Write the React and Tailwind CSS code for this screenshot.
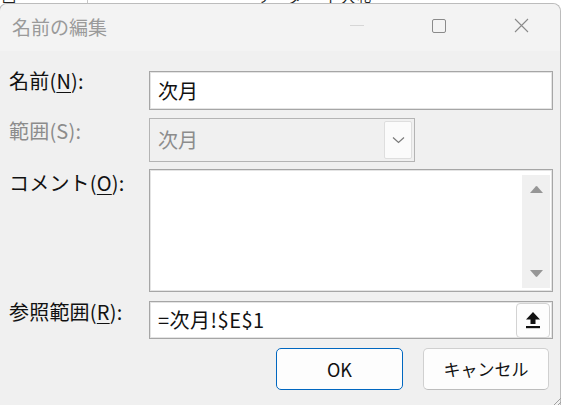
import React from "react";

function Label({ children, disabled, className = "" }) {
  return (
    <div
      className={`w-[140px] shrink-0 text-[20px] leading-[24px] tracking-[0.2px] ${
        disabled ? "text-[#8c8c8c]" : "text-[#111]"
      } ${className}`}
    >
      {children}
    </div>
  );
}

function Tri({ down }) {
  return (
    <svg width="15" height="9" viewBox="0 0 15 9">
      {down ? (
        <path d="M1 1 H14 L8.3 7.6 Q7.5 8.5 6.7 7.6 Z" fill="#969696" />
      ) : (
        <path d="M1 8 H14 L8.3 1.4 Q7.5 0.5 6.7 1.4 Z" fill="#969696" />
      )}
    </svg>
  );
}

export default function App() {
  return (
    <div className="w-[561px] h-[405px] bg-white overflow-hidden relative font-['Noto_Sans_CJK_JP','Liberation_Sans',sans-serif]">
      {/* spreadsheet behind, only a sliver visible */}
      <div className="h-[3px] overflow-hidden flex text-[14px] leading-[14px] text-[#222]">
        <div className="w-[88px] shrink-0 border-r border-[#c8c8c8] pl-[2px] -mt-[11px]">回</div>
        <div className="pl-[168px] -mt-[11px] tracking-[2px]">リーダー ト入札</div>
      </div>

      {/* dialog */}
      <div className="-ml-[1px] w-[562px] h-[402px] bg-[#f0f0f0] border-t border-x border-[#bcbcbc] rounded-t-[8px] flex flex-col">
        {/* title bar */}
        <div className="h-[47px] shrink-0 flex items-center rounded-t-[8px] bg-[#f3f3f3]">
          <div className="pl-[12px] text-[19px] text-[#9a9a9a] leading-[24px] -mt-[2px]">名前の編集</div>
          <div className="flex-1" />
          <div className="w-[14px] h-px bg-[#d6d6d6] mr-[68px] -mt-[4px]" />
          <div className="w-[14px] h-[14px] border border-[#8a8a8a] rounded-[2px] mr-[68px] -mt-[4px]" />
          <svg width="15" height="15" viewBox="0 0 15 15" className="mr-[31px] -mt-[4px]">
            <path d="M1 1 L14 14 M14 1 L1 14" stroke="#8a8a8a" strokeWidth="1.1" />
          </svg>
        </div>

        {/* body */}
        <div className="pl-[9px] flex flex-col">
          {/* name */}
          <div className="flex mt-[20px]">
            <Label className="-mt-[2px]">
              名前(<span className="underline underline-offset-[3px] decoration-1">N</span>):
            </Label>
            <div className="w-[404px] h-[39px] bg-white border border-[#a6a6a6] shadow-[inset_0_0_0_1px_#e4e4e4] flex items-center pl-[8px] text-[20px] text-[#111]">
              次月
            </div>
          </div>

          {/* scope */}
          <div className="flex mt-[8px]">
            <Label disabled className="mt-[1px]">範囲(S):</Label>
            <div className="w-[266px] h-[44px] bg-[#f0f0f0] border border-[#b4b4b4] flex items-center pl-[8px] pr-[2px] text-[20px] text-[#8c8c8c]">
              <div className="flex-1">次月</div>
              <div className="w-[28px] h-[38px] bg-[#fbfbfb] border border-[#dedede] rounded-[2px] flex items-center justify-center">
                <svg width="13" height="8" viewBox="0 0 13 8">
                  <path d="M1 1.5 L6.5 6.5 L12 1.5" stroke="#7a7a7a" strokeWidth="1.2" fill="none" />
                </svg>
              </div>
            </div>
          </div>

          {/* comment */}
          <div className="flex mt-[7px]">
            <Label className="mt-[2px]">
              コメント(<span className="underline underline-offset-[3px] decoration-1">O</span>):
            </Label>
            <div className="w-[404px] h-[123px] bg-white border border-[#a6a6a6] shadow-[inset_0_0_0_1px_#e4e4e4] flex justify-end pt-[5px] pb-[3px] pr-[2px]">
              <div className="w-[28px] bg-[#f0f0f0] flex flex-col items-center justify-between pt-[10px] pb-[10px]">
                <Tri />
                <Tri down />
              </div>
            </div>
          </div>

          {/* reference */}
          <div className="flex mt-[9px]">
            <Label className="-mt-[1px]">
              参照範囲(<span className="underline underline-offset-[3px] decoration-1">R</span>):
            </Label>
            <div className="w-[404px] h-[38px] bg-white border border-[#a6a6a6] shadow-[inset_0_0_0_1px_#e4e4e4] flex items-center pl-[8px] pr-[2px] text-[20px] text-[#111]">
              <div className="flex-1 tracking-[0.5px]">=次月!$E$1</div>
              <div className="w-[34px] h-[35px] bg-[#fdfdfd] border border-[#d3d3d3] rounded-[4px] flex items-center justify-center">
                <svg width="16" height="18" viewBox="0 0 16 18">
                  <path d="M8 1 L15 8.5 H10.5 V13 H5.5 V8.5 H1 Z" fill="#111" />
                  <rect x="1" y="15" width="14" height="2.2" fill="#111" />
                </svg>
              </div>
            </div>
          </div>

          {/* buttons */}
          <div className="flex mt-[9px] pl-[267px] gap-[20px]">
            <div className="w-[127px] h-[42px] bg-[#fdfdfd] border border-[#0067c0] rounded-[5px] flex items-center justify-center text-[18px] text-[#111]">
              OK
            </div>
            <div className="w-[126px] h-[42px] bg-[#fdfdfd] border border-[#d0d0d0] border-b-[#bdbdbd] rounded-[5px] flex items-center justify-center text-[17px] text-[#111]">
              キャンセル
            </div>
          </div>
        </div>
      </div>

      {/* resize grip */}
      <svg width="10" height="10" viewBox="0 0 10 10" className="absolute right-0 bottom-0">
        <path d="M10 3 L3 10 M10 7 L7 10" stroke="#a0a0a0" strokeWidth="1" />
      </svg>
    </div>
  );
}
